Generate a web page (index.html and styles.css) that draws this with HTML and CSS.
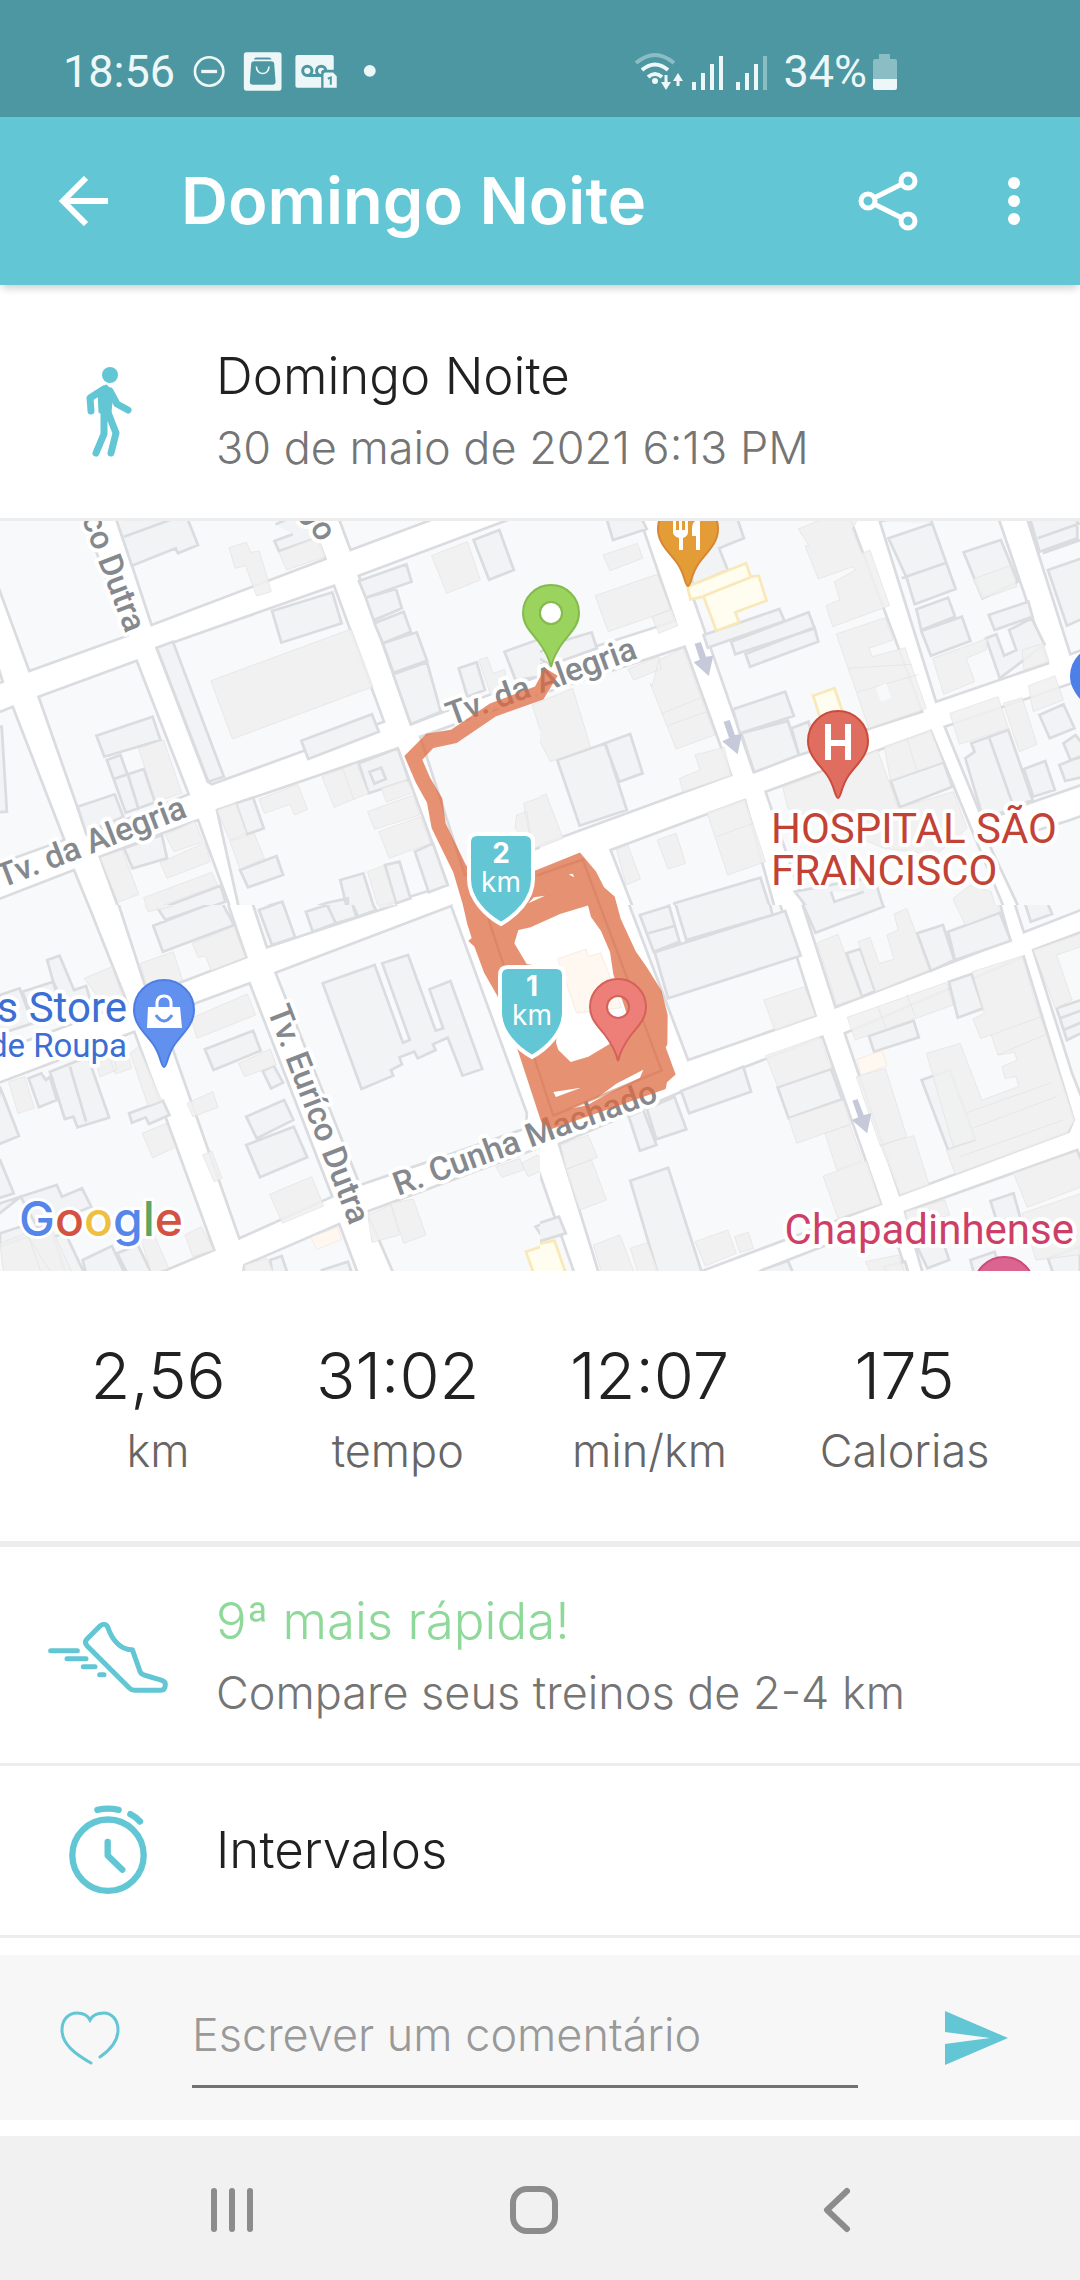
FILE: index.html
```html
<!DOCTYPE html>
<html lang="pt-BR">
<head>
  <meta charset="utf-8">
  <meta name="viewport" content="width=device-width, initial-scale=1">
  <title>Domingo Noite</title>
  <link rel="stylesheet" href="styles.css">
</head>
<body>
<div class="status-bar">
  <div class="status-left">
    <span>18:56</span>
    <svg class="status-notices" viewBox="8 48 554 118" width="185" height="39">
      <circle cx="57" cy="107" r="43" fill="none" stroke="#eef7f7" stroke-width="8"/>
      <path d="M33 107H81" stroke="#eef7f7" stroke-width="10"/>
      <rect x="162" y="49" width="114" height="116" rx="8" fill="#eef7f7"/>
      <path d="M192 71Q194 65 200 65H238Q244 65 246 71Z" fill="#4c97a2"/>
      <path d="M184 86Q184 76 194 76H244Q254 76 254 86L258 138Q258 147 248 147H190Q180 147 180 138Z" fill="#4c97a2"/>
      <path d="M200 92C200 120 238 120 238 92" fill="none" stroke="#eef7f7" stroke-width="5"/>
      <path d="M324 57H428Q434 57 434 63V156H324Q318 156 318 150V63Q318 57 324 57Z" fill="#eef7f7"/>
      <g fill="none" stroke="#4c97a2" stroke-width="9">
        <circle cx="354" cy="105" r="14"/>
        <circle cx="396" cy="105" r="14"/>
        <path d="M354 119H396"/>
      </g>
      <path d="M404 102H436L450 116V164H396V110Q396 102 404 102Z" fill="#4c97a2"/>
      <path d="M409 110H432L443 121V156H403V116Q403 110 409 110Z" fill="#eef7f7"/>
      <path d="M416 129L425 125V147" fill="none" stroke="#4c97a2" stroke-width="6"/>
      <circle cx="543" cy="105" r="18" fill="#eef7f7"/>
    </svg>
  </div>
  <div class="status-right">
    <svg viewBox="634 50 134 40" width="134" height="40" fill="none" stroke="#eef7f7">
      <path d="M637 61Q656 45 675 61" stroke="#8bbdc4" stroke-width="4"/>
      <path d="M643 68Q656 57 669 68M649 75Q656 69 663 75" stroke-width="4"/>
      <circle cx="656" cy="79" r="3" fill="#eef7f7" stroke="none"/>
      <path d="M667 73V84M679 84V75" stroke-width="3"/>
      <path d="M662 80H672L667 88ZM674 79H684L679 71Z" fill="#eef7f7" stroke="none"/>
      <path d="M695 80V88M704 71V88M713 62V88M722 54V88M739 80V88M748 71V88M757 62V88" stroke-width="4"/>
      <path d="M766 54V88" stroke="#8bbdc4" stroke-width="4"/>
    </svg>
    <span>34%</span>
    <svg viewBox="872 52 26 36" width="26" height="36">
      <path d="M879 52H890V57H895Q897 57 897 59V77H873V59Q873 57 875 57H879Z" fill="#8bbdc4"/>
      <path d="M873 77H897V86Q897 88 895 88H875Q873 88 873 86Z" fill="#eef7f7"/>
    </svg>
  </div>
</div>

<header class="app-bar">
  <button class="icon-btn back-btn" aria-label="Voltar">
    <svg viewBox="0 0 50 50" width="50" height="50" fill="none" stroke="#fff" stroke-width="6">
      <path d="M49 25H5M27 2L4 25L27 48"/>
    </svg>
  </button>
  <h1 class="app-title">Domingo Noite</h1>
  <button class="icon-btn share-btn" aria-label="Compartilhar">
    <svg viewBox="0 0 60 62" width="60" height="62" fill="none" stroke="#fff" stroke-width="5">
      <circle cx="10" cy="31" r="7"/>
      <circle cx="50" cy="11" r="7"/>
      <circle cx="50" cy="51" r="7"/>
      <path d="M16 28L44 14M16 34L44 48"/>
    </svg>
  </button>
  <button class="icon-btn more-btn" aria-label="Mais opções">
    <svg viewBox="0 0 14 50" width="14" height="50" fill="#fff">
      <circle cx="7" cy="7" r="6"/><circle cx="7" cy="25" r="6"/><circle cx="7" cy="43" r="6"/>
    </svg>
  </button>
</header>

<main>
  <section class="row row-first">
    <div class="row-icon">
      <svg viewBox="86 365 47 91" width="47" height="91" fill="none" stroke="#62c6d4" stroke-linecap="round" stroke-linejoin="round">
        <circle cx="111" cy="373" r="8" fill="#62c6d4" stroke="none"/>
        <path d="M100 391L107 384L113 390L111 410H101Z" fill="#62c6d4" stroke-width="3"/>
        <path d="M105 387L91 396L92 409M111 389L118 402L129 408" stroke-width="7"/>
        <path d="M105 408L105 432L97 451M108 408L117 431L112 451" stroke-width="7"/>
      </svg>
    </div>
    <div class="row-body">
      <h2 class="row-title">Domingo Noite</h2>
      <p class="row-sub">30 de maio de 2021 6:13 PM</p>
    </div>
  </section>

  <div class="map">
  <svg class="map-svg" viewBox="0 521 1080 750" role="img" aria-label="Mapa do treino">
    <!-- top left tile -->
    <svg x="0" y="515" width="540" height="390" viewBox="0 0 1568 1170" preserveAspectRatio="none">
      <path class="block" d="M-82 0L240 0L370 362L85 468ZM-10 440L8 500L-10 508ZM335 0L440 330L945 132L895 0ZM980 0L1018 105L1290 0ZM455 400L970 212L1115 620L615 808L603 800ZM1042 182L1500 5L1600 -30V470L1193 628ZM112 545L397 437L548 838L253 960ZM-10 595L37 575L187 975L-10 1048ZM-10 1155L215 1065L272 1210H-10ZM290 1025L575 915L680 1210H355ZM630 885L1155 700L1300 1110L1190 1145L720 1300ZM1220 665L1600 525V985L1350 1080ZM1250 1195L1312 1172L1322 1200Z"/>
      <path class="bld" d="M333 0H540L575 90L517 115L510 100L383 152ZM360 65L560 -10M800 28L860 0H925L945 60L810 108L797 78L850 58M790 288L965 232L992 325L817 383ZM455 398L502 380L650 785L605 800ZM875 677L1080 598L1100 650L895 732ZM1375 75L1450 45L1492 165L1420 194ZM1042 198L1180 148L1195 200L1062 248ZM1062 248L1150 222L1167 280L1085 316ZM1087 325L1172 290L1193 350L1112 385ZM1112 385L1210 352L1240 437L1142 473ZM1142 478L1240 442L1280 590L1193 628ZM1332 460L1384 442L1408 525L1357 545ZM1465 410L1600 360V480L1497 495ZM280 662L443 605L466 675L303 725ZM310 735L350 720L370 778L330 792ZM330 792L418 762L450 862L365 893ZM372 780L403 885M225 875L333 838L358 905L250 955ZM1042 745L1155 700L1187 795L1070 835ZM1073 770L1107 758L1120 792L1087 806ZM685 865L735 848L766 940L717 958ZM360 1000L470 960L485 1030L385 1060ZM697 1065L803 1023L822 1080L720 1117ZM1205 1010L1257 985L1300 1110L1245 1132ZM1118 1050L1160 1040L1192 1150L1150 1165ZM988 1095L1055 1075L1090 1190H1010ZM888 1185L950 1163L1010 1150V1210H895ZM755 1180L820 1160L835 1210H760ZM455 1185L640 1112L655 1160L500 1215ZM-10 635L5 635L20 890L-10 892Z"/>
      <path class="plain" d="M665 98L715 82L728 112L753 108L788 230L745 243L713 152L683 160ZM810 112L925 65L945 125L832 165ZM612 497L1020 342L1083 515L675 672ZM1253 122L1357 80L1395 195L1297 235ZM1390 435L1415 427L1432 475L1465 463L1470 490L1425 540ZM402 700L475 675L528 835L453 860ZM935 785L1035 745L1070 835L970 877ZM995 760L1028 855M752 853L865 808L893 883L855 900L842 868L768 895ZM1107 820L1180 795L1200 832L1122 862ZM1067 890L1200 840L1218 900L1088 943ZM1100 950L1220 905L1250 985L1130 1030ZM630 885L685 865L717 955L667 975ZM667 978L738 955L768 1030L697 1062ZM480 960L565 918L590 980L505 1010ZM465 1043L595 983L610 1040L485 1090ZM290 1028L355 1005L403 1138L343 1162ZM417 1148L615 1072L632 1110L430 1188ZM1067 1070L1115 1052L1148 1165L1100 1182ZM1520 865L1600 835V980L1545 1000ZM1500 900L1530 890L1545 990L1495 940ZM1545 570L1600 545V650H1570Z"/>
    </svg>
    <!-- top right tile -->
    <svg x="540" y="515" width="540" height="390" viewBox="0 0 1568 1170" preserveAspectRatio="none">
      <path class="block" d="M-20 -10H283L392 318L-20 455ZM-20 545L420 395L555 780L-20 998ZM358 -10H893L1110 590L960 640L620 770ZM978 -10L1150 560L1475 445L1325 -10ZM1408 -10L1540 418L1600 395V-10ZM655 830L1135 648L1360 1210H780ZM1175 635L1600 485V800L1420 865L1288 920ZM1305 990L1540 915L1600 892V1210H1405ZM205 1005L595 855L690 1210H282Z"/>
      <path class="bld" d="M190 0L212 75L310 42L290 0ZM445 0L573 10L592 70L520 100L545 165L445 210L430 150L470 120ZM475 360L695 282L710 318L487 398ZM555 380L780 292L797 340L567 418ZM597 417L797 337L808 380L610 455ZM560 583L712 530L737 603L580 655ZM585 655L720 618L752 720L622 772ZM730 640L780 620L800 705L752 720ZM50 735L190 685L252 885L115 932ZM188 685L262 657L298 775L230 800ZM985 20L1060 0H1130L1207 222L1088 268L1065 190L1012 70L1140 25M1050 190L1180 143M1230 112L1338 75L1388 200L1285 250ZM1093 283L1185 248L1205 305L1107 345ZM1107 348L1225 305L1250 378L1135 422ZM1303 300L1418 260L1430 305L1320 345ZM1295 370L1325 358L1348 422L1383 405L1362 345L1428 310L1465 388L1335 490ZM1450 110L1560 70V0H1420ZM1445 70L1568 25M1460 115L1568 75M1475 165L1600 120V300L1530 332ZM1235 730L1262 710L1252 685L1360 645L1430 855L1288 915ZM1305 670L1375 875M1450 600L1520 568L1552 640L1480 670ZM1405 762L1467 738L1495 825L1432 845ZM1508 750L1600 712V780L1525 798ZM1520 685L1555 660L1600 720L1540 735ZM1018 797L1172 742L1197 815L1045 877ZM390 1165L640 1088L675 1200H400ZM280 1195L375 1172L385 1210H282ZM740 1130L970 1085L998 1180L800 1210ZM845 1130L855 1160L940 1130M-20 420L75 375L150 352L165 400L30 450Z"/>
      <path class="plain" d="M183 120L283 85L298 130L203 167ZM160 242L340 178L380 285L198 350ZM325 305L383 283L400 332L345 355ZM750 42L850 0H930L905 45L935 115L958 105L975 155L1015 272L850 335L830 272L870 255L855 200L915 165L908 155L808 192L770 93L780 90ZM860 357L1003 308L1025 375L955 400L965 425L1060 398L1122 580L955 640L895 460ZM895 460L1080 448M920 532L1100 478M325 515L345 435L415 400L507 660L395 702L320 505ZM350 597L467 548M370 632L485 590M255 462L345 425L352 462L272 495ZM0 560L95 520L147 697L30 740L-20 640ZM450 720L535 697L555 782L415 830L405 790L465 765ZM1258 192L1365 152L1385 215L1283 252ZM1140 430L1300 370L1295 405L1238 430L1262 500L1172 538ZM1400 405L1462 385L1478 440L1405 465ZM1190 595L1330 545L1360 640L1218 688ZM1345 565L1400 548L1443 688L1392 710ZM1418 512L1495 482L1520 555L1432 590ZM1000 695L1135 645L1170 742L1018 797ZM1065 670L1095 768M705 818L980 705L1040 880L1200 830L1240 940L1150 1020L1000 1000L720 880ZM485 893L595 853L655 1040L545 1080ZM512 965L620 925M340 975L395 955L423 1045L372 1062ZM222 1005L255 990L292 1092L250 1110ZM-20 850L18 838L67 970L-20 1005ZM1200 1150L1250 1110L1310 1130L1330 1200H1215ZM1020 1190L1060 1180L1070 1210H1020Z"/>
      <path class="gap" d="M975 518L1005 505L1020 548L990 560Z"/>
      <path class="shop" d="M428 215L598 145L612 185L635 182L658 257L567 292L578 322L512 347L475 245L437 253ZM475 243L612 187M793 542L855 520L885 610L820 630Z"/>
      <path class="arrow" d="M449 386L467 381L482 425L503 422L490 483L446 442L464 434ZM533 620L551 615L566 660L586 657L574 718L529 679L549 669Z"/>
    </svg>
    <!-- bottom left tile -->
    <svg x="0" y="905" width="540" height="375" viewBox="0 15 1568 1125" preserveAspectRatio="none">
      <path class="block" d="M-20 -10H247L370 310L-20 460ZM337 -10H655L715 172L430 285ZM727 -10L775 142L1220 -10ZM-20 555L390 395L622 1050L460 1120L-20 1150ZM468 348L725 250L965 890L695 1015ZM710 1095L985 972L1050 1150H700ZM1065 935L1600 730V1150H1155ZM800 218L1310 18L1530 640L1527 685L1045 855Z"/>
      <path class="bld" d="M455 20L480 60L658 -5M445 77L640 0L680 75L473 155ZM752 30L820 5L857 112L790 135ZM888 35L950 15L975 70L908 95ZM950 15L1015 -5L1040 50L975 70ZM1020 0H1075L1092 30L1035 52ZM137 180L173 167L215 270L250 258L262 300L180 340ZM0 285L57 265L95 370L-10 405ZM65 275L155 245L190 330L100 365ZM595 448L735 392L757 452L620 510ZM763 513L795 497L822 548L787 565ZM715 650L825 600L852 660L745 715ZM715 735L853 680L892 772L755 832ZM375 640L473 602L492 645L433 672L423 652L383 668ZM83 535L120 520L133 540L145 530L165 600L113 622ZM145 515L255 470L317 653L225 682L213 650L188 657ZM203 500L250 665M0 560L55 708L-20 740ZM-20 770L0 780L40 880L-20 900ZM0 910L165 855L180 890L238 865L265 920L110 985L60 890L-20 955ZM0 1000L60 980L80 1010L0 1040ZM240 1080L325 1038L362 1120H250ZM155 1010L190 1000L245 1120H190ZM340 1060L400 1035L440 1120H370ZM785 1080L818 1068L835 1120H790ZM935 1110L1010 1085L1022 1120H940ZM937 250L1088 195L1170 428L1190 420L1110 190L1185 165L1265 392L1287 385L1247 268L1308 243L1400 507L1343 527L1300 413L1257 433L1265 450L1213 475L1203 455L1160 472L1167 493L1135 510L1142 527L1050 567ZM1555 980L1600 960V1050Z"/>
      <path class="plain" d="M415 0H475L500 20L430 35ZM558 130L678 80L713 172L613 212L597 168L575 172ZM408 190L503 155L530 240L430 275ZM555 355L718 282L742 345L572 415ZM693 490L785 447L802 495L710 530ZM543 610L618 575L633 622L560 650ZM588 765L615 753L645 835L622 845ZM783 883L905 830L940 918L820 970ZM245 235L325 200L355 290L290 300ZM378 460L402 440L470 603L430 617ZM413 700L483 670L510 742L443 773ZM25 545L72 530L100 625L52 640ZM280 490L330 470L340 510L290 530ZM320 480L370 460L382 505L335 522ZM537 1005L585 980L620 1050L560 1070ZM1068 945L1135 915L1160 1005L1080 1027ZM1135 910L1200 897L1237 1005L1172 1030ZM1440 800L1510 775L1520 810L1458 832ZM1515 790L1560 765L1600 800L1533 830ZM0 1030L75 1000L150 1120H10ZM80 1000L150 985L210 1120H120ZM410 1020L450 1010L490 1105L440 1120ZM710 1095L775 1075L795 1120H712ZM1090 0L1140 -10L1150 15L1105 25Z"/>
      <path class="cafe" d="M903 1012L980 982L992 1018L920 1048Z"/>
      <path class="shop" d="M1527 1055L1600 1030V1150H1560Z"/>
    </svg>
    <!-- bottom right tile -->
    <svg x="540" y="905" width="540" height="375" viewBox="0 15 1568 1125" preserveAspectRatio="none">
      <path class="block" d="M250 -10H690L800 347L430 480ZM755 -10H1330L1365 120L858 322ZM1372 -10L1405 97L1600 18V-10ZM-20 765L110 1150H-20ZM55 732L400 580L820 410L990 912L465 1115L180 1150ZM885 400L1405 170L1550 660L1535 695L1045 885ZM1432 150L1600 85V665L1545 520ZM1060 935L1560 750L1600 850V1150H1120ZM630 1118L720 1080L1015 962L1075 1150H620Z"/>
      <path class="bld" d="M290 45L375 18L405 125L330 155ZM315 100L390 78M393 10L450 0H665L675 45L425 120ZM333 157L712 33L757 167L372 295ZM762 10L990 -15L998 20L800 98ZM1095 100L1170 75L1203 180L1135 213ZM1185 95L1335 38L1367 122L1205 180ZM890 160L930 147L973 273L935 290ZM1405 0L1425 65L1487 42L1470 0ZM1187 245L1253 222L1287 325L1213 353ZM955 408L1085 362L1100 412L970 455ZM690 562L845 507L877 598L722 655ZM410 573L590 500L613 575L433 640ZM310 627L390 590L425 688L338 718ZM258 650L300 630L338 735L290 752ZM262 842L372 803L480 1150H350ZM1108 540L1190 510L1265 720L1185 750ZM1500 325L1600 290V385L1530 420ZM1510 355L1600 320M1520 390L1600 355M1308 903L1375 880L1395 955L1330 975ZM1095 1040L1165 1010L1188 1080L1125 1105ZM1250 1080L1320 1055L1340 1120H1260ZM1475 1075L1568 1040V1120H1490ZM-20 975L55 950L75 1000L-20 1030ZM645 1110L720 1082L735 1120H650ZM1000 1100L1060 1085L1070 1120H1005Z"/>
      <path class="plain" d="M650 300L768 260L800 347L682 392ZM805 128L865 103L932 290L862 315ZM923 125L958 112L985 190L1028 178L1007 105L1040 90L1028 42L1065 25L1130 210L975 275ZM1200 0L1235 75L1335 35L1320 -10ZM655 467L812 410L845 505L690 560ZM722 655L880 600L902 672L745 730ZM827 700L900 675L937 780L862 810ZM822 828L948 782L990 912L865 955ZM918 530L1003 505L1065 710L988 738ZM988 735L1085 707L1130 855L1045 885L1010 790ZM892 352L1180 247L1200 315L915 420ZM980 318L1005 385M1065 283L1090 350M1255 215L1400 168L1435 295L1553 660L1530 700L1205 823L1180 750L1265 720L1200 740L1122 460L1220 430L1283 600L1390 560L1382 530L1350 535L1342 500L1385 480L1378 457L1330 465L1310 405L1280 415L1257 357L1290 340ZM1240 638L1485 548M1255 685L1500 590M1220 770L1520 660M1310 405L1455 350M1330 465L1475 400M1432 150L1600 90L1600 130L1500 165L1545 300L1497 325ZM1375 820L1555 755L1600 850L1415 922ZM1400 940L1600 870V1060L1440 1080ZM1060 935L1175 900L1190 945L1070 980ZM60 735L140 705L167 772L75 808ZM75 808L150 780L193 900L115 930ZM155 1035L232 1005L275 1120H180ZM262 1045L312 1028L345 1120H285ZM450 1025L545 990L570 1060L480 1098ZM565 1010L605 997L620 1045L580 1058ZM945 1085L1040 1065L1060 1120H960Z"/>
      <path class="cafe" d="M920 478L993 452L1008 497L932 525Z"/>
      <path class="shop" d="M-20 1035L42 1022L75 1120H-20Z"/>
      <path class="arrow" d="M907 602L922 597L940 645L962 640L950 700L905 660L924 652Z"/>
    </svg>

    <g class="street">
      <text transform="translate(2 888) rotate(-21)">Tv. da Alegria</text>
      <text transform="translate(451 726) rotate(-20)">Tv. da Alegria</text>
      <text transform="translate(398 1196) rotate(-20)">R. Cunha Machado</text>
      <text transform="translate(267 1010) rotate(69)">Tv. Euríco Dutra</text>
      <text transform="translate(126 634) rotate(69)" text-anchor="end">Tv. Euríco Dutra</text>
      <text transform="translate(318 543) rotate(64)" text-anchor="end">Diogo</text>
    </g>

    <!-- recorded route -->
    <svg x="380" y="560" width="320" height="580" viewBox="0 0 960 1568" preserveAspectRatio="none">
      <path class="cafe" d="M533 1078L618 1052L625 1072L662 1062L725 1210L590 1225Z"/>
      <path class="route" fill-rule="evenodd" d="M495 292L533 313L490 377L347 423L230 495L160 508L127 540L150 588L187 645L197 712L258 825L330 880L470 838L600 791L648 842L672 885L704 910L722 970L767 1058L800 1100L845 1165L863 1230L862 1310L857 1317L887 1391L861 1412L857 1430L700 1480L515 1538L484 1520L415 1330L353 1180L312 1115L283 1045L265 1030L275 1022L262 985L248 930L220 845L155 725L141 656L108 603L73 530L139 470L213 459L330 388L465 342ZM415 1000L403 1036L440 1092L550 1110L528 1305L535 1325L572 1357L625 1343L690 1308L740 1225L700 1120L690 1060L663 1003L633 965L624 934L540 957L452 993ZM520 1438L603 1427L528 1452ZM573 1483L655 1452L710 1415L790 1378L780 1400L700 1435L620 1475ZM445 928L462 912L495 908ZM566 850L578 848L583 858Z"/>
      <path class="route-edge" d="M470 853L608 810L845 1380L520 1502L325 970"/>
    </svg>

    <g class="place">
      <text class="hospital" x="771" y="843">HOSPITAL SÃO</text>
      <text class="hospital" x="771" y="885">FRANCISCO</text>
      <text class="store" x="127" y="1022" text-anchor="end">s Store</text>
      <text class="store store-kind" x="127" y="1057" text-anchor="end">de Roupa</text>
      <text class="club" x="1074" y="1244" text-anchor="end">Chapadinhense</text>
    </g>

    <defs>
      <path id="pin" d="M0 57C-3 57-3 45-11 34C-18 24-30 15-30 0A30 30 0 0 1 30 0C30 15 18 24 11 34C3 45 3 57 0 57Z"/>
      <path id="pin-hole" fill-rule="evenodd" d="M0 54C-2 45-7 36-13 28C-20 19-28 12-28 0A28 28 0 0 1 28 0C28 12 20 19 13 28C7 36 2 45 0 54ZM-11 0A11 11 0 0 0 11 0A11 11 0 0 0-11 0Z"/>
      <path id="shield" d="M-24-42H24Q32-42 32-34V3C32 24 14 40 0 48C-14 40-32 24-32 3V-34Q-32-42-24-42Z"/>
    </defs>
    <g transform="translate(688 529)">
      <use href="#pin" fill="#e49c36" stroke="#d68735" stroke-width="2"/>
      <path d="M-15-10H-12V1H-9V-10H-6V1H-3V-10H0V3Q0 7-5 9V21H-9V9Q-15 7-15 3ZM12-10V21H8V7H4V0Q4-9 12-10Z" fill="#fff"/>
    </g>
    <g transform="translate(838 741)">
      <use href="#pin" fill="#df6e60" stroke="#cc4a3c" stroke-width="2"/>
      <path d="M-10-17V19M10-17V19M-10 2H10" stroke="#fff" stroke-width="6"/>
    </g>
    <g transform="translate(164 1010)">
      <use href="#pin" fill="#6190ee" stroke="#4d7ee4" stroke-width="2"/>
      <path d="M-16-3H16L18 18H-17Z" fill="#fff"/>
      <path d="M-7-1V-8Q-6-14 0-14Q6-14 7-8V-1" fill="none" stroke="#fff" stroke-width="3"/>
      <path d="M-8 5Q0 17 8 5" fill="none" stroke="#6190ee" stroke-width="3"/>
    </g>
    <use href="#pin" x="1100" y="676" fill="#4d7fe8"/>
    <use href="#pin" x="1004" y="1287" fill="#dc658f" stroke="#cd4a78" stroke-width="2"/>
    <g transform="translate(551 613)">
      <use href="#pin-hole" fill="#9ad45f" stroke="#84bb4c" stroke-width="2"/>
      <circle r="11" fill="#fff" stroke="#84bb4c" stroke-width="2"/>
    </g>
    <use href="#pin-hole" x="618" y="1007" fill="#ed7e78" stroke="#d4615a" stroke-width="2"/>
    <g class="marker" transform="translate(501 876)">
      <use href="#shield"/>
      <text class="marker-num" y="-13">2</text>
      <text y="16">km</text>
    </g>
    <g class="marker" transform="translate(532 1009)">
      <use href="#shield"/>
      <text class="marker-num" y="-13">1</text>
      <text y="16">km</text>
    </g>
    <text class="google" x="19" y="1236"><tspan fill="#5586ea">G</tspan><tspan fill="#d35241">o</tspan><tspan fill="#efbf42">o</tspan><tspan fill="#5586ea">g</tspan><tspan fill="#5aa663">l</tspan><tspan fill="#d35241">e</tspan></text>
  </svg>
  </div>

  <dl class="stats">
    <div class="stat"><dd>2,56</dd><dt>km</dt></div>
    <div class="stat"><dd>31:02</dd><dt>tempo</dt></div>
    <div class="stat"><dd>12:07</dd><dt>min/km</dt></div>
    <div class="stat"><dd>175</dd><dt>Calorias</dt></div>
  </dl>

  <section class="row">
    <div class="row-icon">
      <svg viewBox="24 60 360 213" width="120" height="71" fill="none" stroke="#62c6d4" stroke-width="15" stroke-linecap="round" stroke-linejoin="round">
        <path d="M180 72L141 111Q132 121 141 131L268 258Q275 265 284 265H362Q376 265 376 247Q376 239 366 235L312 219Q303 216 300 208L277 143C240 145 215 110 204 77Q196 60 180 72Z"/>
        <path d="M32 146H112M81 170H138M130 194H165M179 218H192"/>
      </svg>
    </div>
    <div class="row-body">
      <h2 class="row-title row-title-green">9ª mais rápida!</h2>
      <p class="row-sub">Compare seus treinos de 2-4 km</p>
    </div>
  </section>

  <section class="row row-single">
    <div class="row-icon">
      <svg viewBox="86 617 234 269" width="78" height="90" fill="none" stroke="#62c6d4" stroke-width="19" stroke-linecap="round" stroke-linejoin="round">
        <circle cx="203" cy="767" r="107"/>
        <path d="M202 727V768L246 811M171 631Q203 624 235 631M270 644Q286 652 299 666"/>
      </svg>
    </div>
    <div class="row-body">
      <h2 class="row-title">Intervalos</h2>
    </div>
  </section>
</main>

<form class="comment">
  <button class="icon-btn like-btn" type="button" aria-label="Curtir">
    <svg viewBox="0 0 60 54" width="60" height="54" fill="none" stroke="#62c6d4" stroke-width="3" stroke-linecap="round">
      <path d="M40 46C50 39 58 30 58 19C58 8 51 2 44 2C37 2 32 5 30 9C28 5 23 2 17 2C9 2 2 8 2 19C2 33 15 43 31 52"/>
    </svg>
  </button>
  <input class="comment-input" type="text" placeholder="Escrever um comentário" aria-label="Escrever um comentário">
  <button class="icon-btn send-btn" aria-label="Enviar">
    <svg viewBox="0 0 63 54" width="63" height="54" fill="#62c6d4">
      <path d="M0 0L63 27L0 54V33L45 27L0 21Z"/>
    </svg>
  </button>
</form>

<nav class="nav-bar">
  <button class="icon-btn" aria-label="Recentes">
    <svg viewBox="0 0 48 48" width="48" height="48" stroke="#8c8c8c" stroke-width="6" stroke-linecap="round">
      <path d="M6 5V43M24 5V43M42 5V43"/>
    </svg>
  </button>
  <button class="icon-btn" aria-label="Início">
    <svg viewBox="0 0 48 48" width="48" height="48" fill="none" stroke="#8c8c8c" stroke-width="6">
      <rect x="3" y="3" width="42" height="42" rx="14"/>
    </svg>
  </button>
  <button class="icon-btn" aria-label="Voltar">
    <svg viewBox="0 0 48 48" width="48" height="48" fill="none" stroke="#8c8c8c" stroke-width="6" stroke-linecap="round" stroke-linejoin="round">
      <path d="M35 5L15 24L35 43"/>
    </svg>
  </button>
</nav>
</body>
</html>
```
FILE: styles.css
```css
* {
  box-sizing: border-box;
}
body {
  margin: 0;
  background: #fff;
  color: #212121;
  font-family: Inter, Roboto, sans-serif;
}
h1, h2, p, dl, dd {
  margin: 0;
}
svg {
  display: block;
}
.icon-btn {
  flex: none;
  padding: 0;
  border: 0;
  background: none;
}

/* status bar */
.status-bar {
  display: flex;
  justify-content: space-between;
  height: 117px;
  padding: 26px 182px 0 63px;
  background: #4c97a2;
  color: #eef7f7;
  font: 400 45px/90px Roboto, sans-serif;
}
.status-left {
  display: flex;
  align-items: center;
  gap: 17px;
}
.status-right {
  display: flex;
  align-items: center;
}
.status-right span {
  margin: 0 5px 0 16px;
}

/* app bar */
.app-bar {
  position: relative;
  display: flex;
  align-items: center;
  height: 168px;
  padding: 0 59px;
  background: #62c6d4;
  box-shadow: 0 5px 8px -2px rgba(0, 0, 0, .2);
}
.app-title {
  flex: 1;
  margin-left: 72px;
  color: #fff;
  font-size: 65px;
  font-weight: 600;
  line-height: 80px;
}
.more-btn {
  margin-left: 89px;
}

/* rows */
.row {
  display: flex;
  align-items: center;
  padding: 38px 0 34px;
  border-bottom: 3px solid #ededed;
}
.row-first {
  padding-top: 55px;
}
.row-single {
  padding: 39px 0 40px;
}
.row-icon {
  display: flex;
  justify-content: center;
  flex: none;
  width: 216px;
}
.row-title {
  font-size: 51px;
  font-weight: 350;
  line-height: 72px;
}
.row-title-green {
  color: #8ed99a;
}
.row-sub {
  color: #757575;
  font-size: 45px;
  font-weight: 350;
  line-height: 72px;
}

/* map */
.map-svg {
  width: 100%;
  height: auto;
  background: #fff;
}
.block {
  fill: #f8f9fb;
  stroke: #dadce0;
  stroke-width: 8px;
}
.bld {
  fill: #f1f3f5;
  stroke: #dadce0;
  stroke-width: 8px;
}
.plain {
  fill: #f0f0f0;
  fill-opacity: .85;
  stroke: #e2e2e2;
  stroke-width: 2px;
}
.gap {
  fill: #f8f9fb;
}
.shop {
  fill: #fffcf0;
  stroke: #f9e8b8;
  stroke-width: 8px;
}
.cafe {
  fill: #fef8f1;
  stroke: #f3e5d8;
  stroke-width: 2px;
}
.arrow {
  fill: #c5c9da;
}
.route {
  fill: #de6b42;
  fill-opacity: .74;
}
.route-edge {
  fill: none;
  stroke: #d67f61;
  stroke-opacity: .6;
  stroke-width: 7px;
}
.street,
.place {
  font-family: Roboto, sans-serif;
  stroke: #fff;
  stroke-width: 8px;
  stroke-linejoin: round;
  paint-order: stroke;
}
.street {
  fill: #85898d;
  font-size: 33px;
  font-weight: 500;
}
.place {
  font-size: 42px;
}
.hospital {
  fill: #c24336;
}
.store {
  fill: #3c6fd4;
}
.store-kind {
  font-size: 33px;
}
.club {
  fill: #cd3f66;
}
.marker {
  fill: #62c6d4;
  stroke: #fff;
  stroke-width: 4px;
  font-size: 28px;
  text-anchor: middle;
}
.marker text {
  fill: #fff;
  stroke: none;
}
.marker .marker-num {
  font-weight: 700;
}
.google {
  font-size: 48px;
  font-weight: 500;
  stroke: #fff;
  stroke-width: 6px;
  paint-order: stroke;
}

/* stats */
.stats {
  display: flex;
  justify-content: space-evenly;
  padding: 65px 0 55px;
  border-bottom: 6px solid #ededed;
  text-align: center;
}
.stat {
  display: flex;
  flex-direction: column;
}
.stat dd {
  font-size: 65px;
  font-weight: 350;
  line-height: 80px;
}
.stat dt {
  color: #666;
  font-size: 45px;
  font-weight: 350;
  line-height: 70px;
}

/* comment box */
.comment {
  display: flex;
  align-items: center;
  height: 165px;
  margin: 17px 0 16px;
  padding: 0 72px 0 60px;
  background: #f7f7f7;
}
.comment-input {
  flex: 1;
  min-width: 0;
  height: 101px;
  margin: 0 87px 0 72px;
  padding: 0 0 3px;
  border: 0;
  border-bottom: 3px solid #707372;
  background: none;
  color: #212121;
  font: 350 45px Inter, sans-serif;
}
.comment-input::placeholder {
  color: #999;
  opacity: 1;
}

/* navigation bar */
.nav-bar {
  display: flex;
  align-items: center;
  justify-content: space-between;
  height: 144px;
  padding: 4px 220px 0 208px;
  background: #f1f1f1;
}
```
